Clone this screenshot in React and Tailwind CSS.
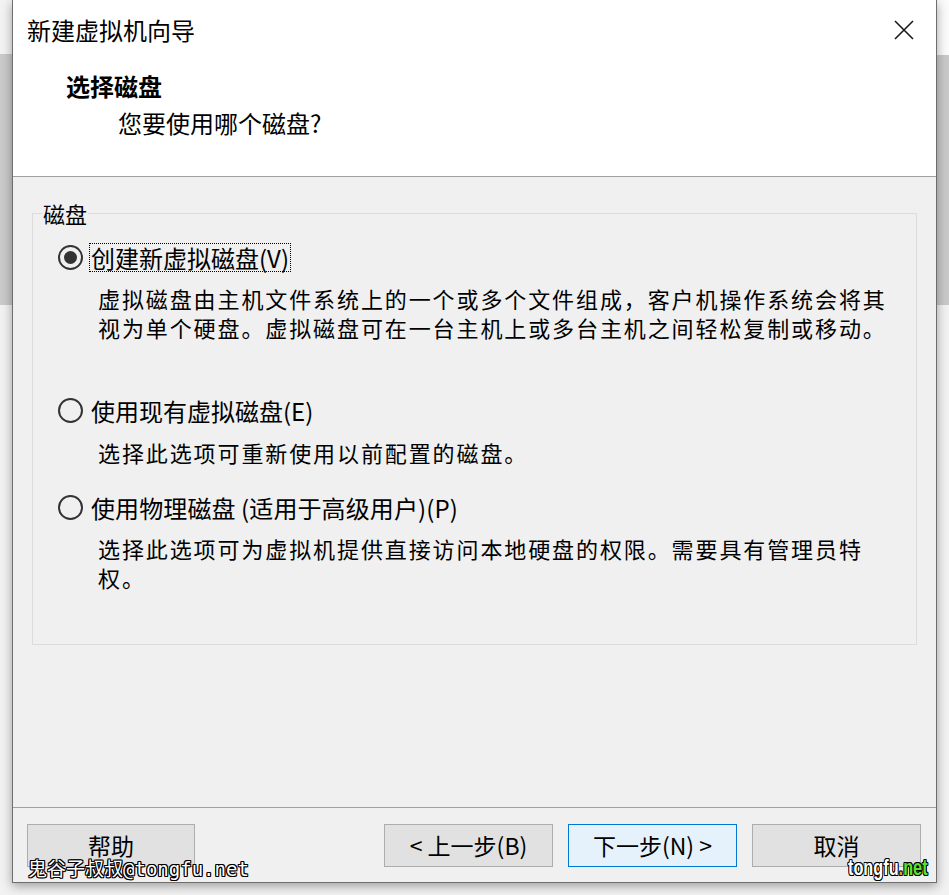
import React from "react";

const FONT = { fontFamily: '"Noto Sans CJK SC", "Noto Sans", sans-serif' };

function Radio({ checked }) {
  return (
    <div className="w-[25px] h-[25px] rounded-full border-2 border-[#333333] flex items-center justify-center shrink-0">
      {checked && <div className="w-[13px] h-[13px] rounded-full bg-[#333333]" />}
    </div>
  );
}

function Btn({ children, primary }) {
  return (
    <div
      className={
        "w-[169px] h-[43px] flex items-center justify-center text-[23px] text-black border " +
        (primary ? "bg-[#e5f1fb] border-[#0078d7]" : "bg-[#e1e1e1] border-[#adadad]")
      }
    >
      {children}
    </div>
  );
}

export default function App() {
  return (
    <div className="w-[949px] h-[895px] relative overflow-hidden bg-[#f2f2f2] flex" style={FONT}>
      {/* left strip */}
      <div className="w-[12px] flex flex-col">
        <div className="h-[54px] bg-[#f3f3f3]" />
        <div className="h-[251px] bg-[#cacaca]" />
        <div className="flex-1 bg-[#f2f2f2]" />
      </div>

      {/* window */}
      <div className="w-[925px] flex flex-col">
        <div className="h-[883px] bg-[#f0f0f0] border-x border-b border-[#6e6e6e] flex flex-col relative z-10 shadow-[0_3px_10px_rgba(0,0,0,0.35)]">
          {/* header */}
          <div className="h-[177px] bg-white border-b border-[#a0a0a0] flex flex-col">
            <div className="h-[59px] flex items-center justify-between pl-[14px] pr-[22px]">
              <span className="text-[24px] leading-[30px] text-black">新建虚拟机向导</span>
              <svg width="20" height="20" viewBox="0 0 20 20">
                <path d="M1 1 L19 19 M19 1 L1 19" stroke="#1a1a1a" strokeWidth="1.6" fill="none" />
              </svg>
            </div>
            <div className="pl-[53px] mt-[12px] text-[24px] leading-[29px] font-bold text-black">选择磁盘</div>
            <div className="pl-[105px] mt-[8px] text-[24px] leading-[29px] text-black">您要使用哪个磁盘?</div>
          </div>

          {/* content */}
          <div className="h-[630px] px-[19px] pt-[36px]">
            <div className="relative h-[432px] border border-[#dcdcdc] pt-[29px] pl-[25px] text-black">
              <span className="absolute -top-[15px] left-[9px] px-[1px] bg-[#f0f0f0] text-[22px] leading-[29px]">磁盘</span>

              <div className="flex items-center h-[29px]">
                <Radio checked />
                <span className="ml-[6px] px-[1px] border border-dotted border-black text-[24px] leading-[27px]">创建新虚拟磁盘(V)</span>
              </div>
              <div className="mt-[12px] pl-[40px] text-[22px] leading-[29px] tracking-[1.9px]">
                虚拟磁盘由主机文件系统上的一个或多个文件组成，客户机操作系统会将其
                <br />
                视为单个硬盘。虚拟磁盘可在一台主机上或多台主机之间轻松复制或移动。
              </div>

              <div className="flex items-center h-[29px] mt-[54px]">
                <Radio />
                <span className="ml-[7px] px-[1px] text-[24px] leading-[27px]">使用现有虚拟磁盘(E)</span>
              </div>
              <div className="mt-[13px] pl-[40px] text-[22px] leading-[29px] tracking-[1.9px]">
                选择此选项可重新使用以前配置的磁盘。
              </div>

              <div className="flex items-center h-[29px] mt-[26px]">
                <Radio />
                <span className="ml-[7px] px-[1px] text-[24px] leading-[27px] tracking-[0.1px]">使用物理磁盘 (适用于高级用户)(P)</span>
              </div>
              <div className="mt-[12px] pl-[40px] text-[22px] leading-[29px] tracking-[1.9px]">
                选择此选项可为虚拟机提供直接访问本地硬盘的权限。需要具有管理员特
                <br />
                权。
              </div>
            </div>
          </div>

          {/* footer */}
          <div className="flex-1 border-t border-[#a0a0a0] pt-[16px] pl-[14px] pr-[15px] flex">
            <div className="w-[168px] h-[43px] flex items-center justify-center text-[23px] text-black border bg-[#e1e1e1] border-[#adadad]">帮助</div>
            <div className="flex-1" />
            <div className="flex gap-[15px]">
              <Btn>&lt;&nbsp;上一步(B)</Btn>
              <Btn primary>下一步(N)&nbsp;&gt;</Btn>
              <Btn>取消</Btn>
            </div>
          </div>

          {/* watermarks */}
          <span
            className="absolute left-[15px] top-[857px] text-[19px] leading-[24px] text-white [text-shadow:-1px_-1px_0_#000,1px_-1px_0_#000,-1px_1px_0_#000,1px_1px_0_#000,0_1px_0_#000,0_-1px_0_#000,1px_0_0_#000,-1px_0_0_#000]"
            style={{ fontFamily: '"DejaVu Sans Mono", "Noto Sans CJK SC", monospace' }}
          >
            鬼谷子叔叔@tongfu.net
          </span>
          <span
            className="absolute left-[835px] top-[855px] origin-left scale-x-[0.74] text-[22px] leading-[26px] font-bold [text-shadow:-1px_-1px_0_#000,1px_-1px_0_#000,-1px_1px_0_#000,1px_1px_0_#000,0_1px_0_#000,0_-1px_0_#000,1px_0_0_#000,-1px_0_0_#000]"
            style={{ fontFamily: '"Liberation Sans", sans-serif' }}
          >
            <span className="text-white">tongfu</span>
            <span className="text-[#f2a100]">.</span>
            <span className="text-[#5ee030]">net</span>
          </span>
        </div>
        <div className="flex-1 bg-[#f2f2f2]" />
      </div>

      {/* right strip */}
      <div className="w-[12px] flex flex-col">
        <div className="h-[55px] bg-[#fbfbfb]" />
        <div className="h-[250px] bg-[#c9c9c9]" />
        <div className="flex-1 bg-[#f2f2f2]" />
      </div>
    </div>
  );
}
